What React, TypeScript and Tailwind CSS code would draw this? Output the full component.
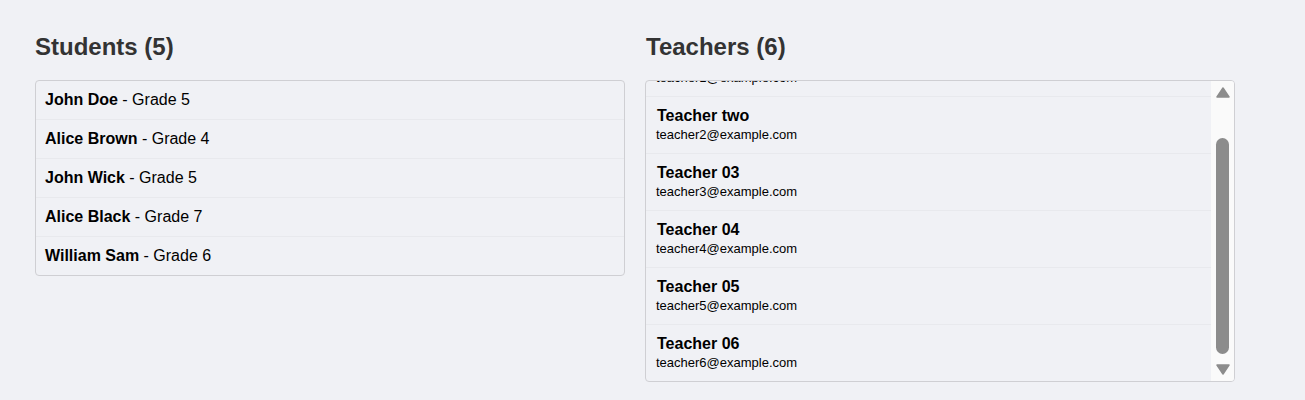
import React, { useEffect, useRef } from "react";

const students = [
  { name: "John Doe", grade: 5 },
  { name: "Alice Brown", grade: 4 },
  { name: "John Wick", grade: 5 },
  { name: "Alice Black", grade: 7 },
  { name: "William Sam", grade: 6 },
];

const teachers = [
  { name: "Teacher one", email: "teacher1@example.com" },
  { name: "Teacher two", email: "teacher2@example.com" },
  { name: "Teacher 03", email: "teacher3@example.com" },
  { name: "Teacher 04", email: "teacher4@example.com" },
  { name: "Teacher 05", email: "teacher5@example.com" },
  { name: "Teacher 06", email: "teacher6@example.com" },
];

function Arrow({ up }: { up: boolean }) {
  return (
    <svg width="14" height="11" viewBox="0 0 14 11" className="block">
      <polygon
        points={up ? "7,1 13,10 1,10" : "1,1 13,1 7,10"}
        fill="#8c8c8c"
        stroke="#8c8c8c"
        strokeWidth="1.5"
        strokeLinejoin="round"
      />
    </svg>
  );
}

export default function App() {
  const ref = useRef<HTMLDivElement>(null);
  useEffect(() => {
    if (ref.current) ref.current.scrollTop = 10000;
  }, []);
  return (
    <div
      className="min-h-[400px] bg-[#f0f1f5] text-black"
      style={{ fontFamily: '"Liberation Sans", Arial, sans-serif' }}
    >
      <div className="flex gap-[20px] pl-[35px] pt-[32px]">
        <div className="w-[590px]">
          <h2 className="mb-[19px] text-[24px] font-bold leading-[29px] text-[#333]">
            Students (5)
          </h2>
          <div className="rounded-[4px] border border-[#cfcfd3]">
            {students.map((s, i) => (
              <div
                key={s.name}
                className={
                  "px-[9px] py-[10px] text-[16px] leading-[18px] " +
                  (i < students.length - 1 ? "border-b border-[#e8e9ed]" : "")
                }
              >
                <span className="font-bold">{s.name}</span> - Grade {s.grade}
              </div>
            ))}
          </div>
        </div>
        <div className="w-[590px]">
          <h2 className="mb-[19px] pl-px text-[24px] font-bold leading-[29px] text-[#333]">
            Teachers (6)
          </h2>
          <div className="flex h-[302px] overflow-hidden rounded-[4px] border border-[#cfcfd3]">
            <div ref={ref} className="min-w-0 flex-1 overflow-hidden">
              {teachers.map((t, i) => (
                <div
                  key={t.name}
                  className={
                    "px-[10px] py-[10px] " +
                    (i < teachers.length - 1 ? "border-b border-[#e8e9ed]" : "")
                  }
                >
                  <div className="pl-px text-[16px] font-bold leading-[18px]">{t.name}</div>
                  <div className="mt-[2px] text-[13px] leading-[16px]">{t.email}</div>
                </div>
              ))}
            </div>
            <div className="flex w-[23px] shrink-0 flex-col items-center bg-[#fafafa] pt-[6px] pb-[6px]">
              <Arrow up />
              <div className="mt-[40px] h-[216px] w-[13px] rounded-full bg-[#8c8c8c]" />
              <div className="mt-[10px]">
                <Arrow up={false} />
              </div>
            </div>
          </div>
        </div>
      </div>
    </div>
  );
}
